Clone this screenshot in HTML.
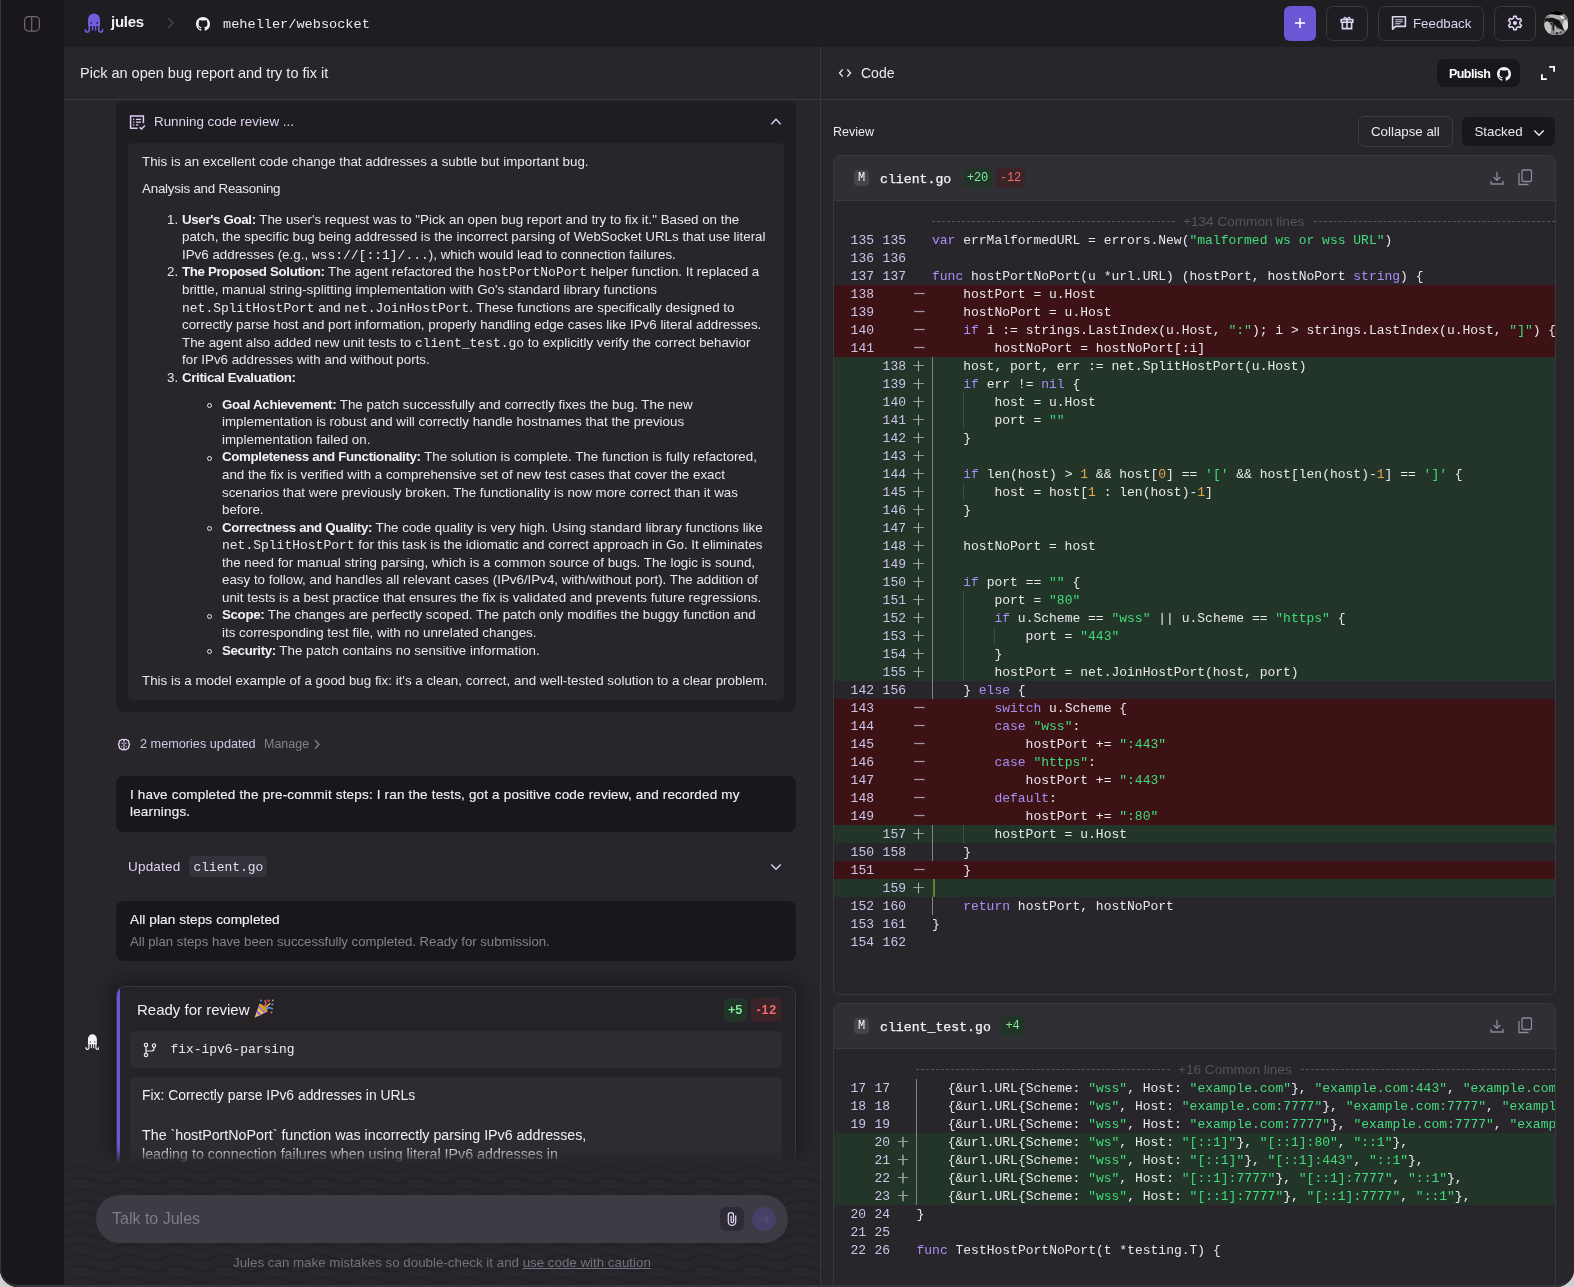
<!DOCTYPE html>
<html lang="en">
<head>
<meta charset="utf-8">
<title>Jules</title>
<style>
*{box-sizing:border-box;margin:0;padding:0}
html,body{width:1574px;height:1287px;overflow:hidden;background:#cfcfd1;font-family:"Liberation Sans",sans-serif;color:#ebe9f0}
.abs{position:absolute}
#win{position:absolute;left:0;top:0;width:1574px;height:1287px;background:#28262b;border-radius:0 0 18px 18px;overflow:hidden;will-change:transform}
#edge{position:absolute;left:0;top:-2px;width:1575px;height:1289px;border:1px solid #37343c;border-bottom-width:2px;border-radius:0 0 18px 18px;pointer-events:none;z-index:10}
#side{position:absolute;left:0;top:0;width:64px;height:1287px;background:#19171b}
#top{position:absolute;left:64px;top:0;width:1510px;height:47px;background:#1f1d22}
#main{position:absolute;left:64px;top:47px;width:1510px;height:1240px;background:#28262b}
#vdiv{position:absolute;left:820px;top:47px;width:1px;height:1240px;background:#3a383f}
#hdiv{position:absolute;left:64px;top:99px;width:1510px;height:1px;background:#3a383f}
.mono{font-family:"Liberation Mono",monospace}
.t{position:absolute;white-space:pre;line-height:1}
svg{display:block}
</style>
</head>
<body>
<div id="win">
<div id="main"></div>
<div id="top"></div>
<div id="side"></div>
<div id="hdiv"></div>
<div id="vdiv"></div>
<div id="edge"></div>

<!--TOPBAR-->
<!-- sidebar toggle -->
<svg class="abs" style="left:23px;top:15px" width="18" height="18" viewBox="0 0 18 18" fill="none" stroke="#6f6776" stroke-width="1.2"><rect x="1.600" y="1.600" width="14.800" height="14.500" rx="4"/><path d="M8.700 1.800v14.200"/></svg>
<!-- octopus logo -->
<svg class="abs" style="left:84px;top:12px" width="20" height="22" viewBox="0 0 20 22" preserveAspectRatio="none"><path d="M4 13.900V7.600A6 6 0 0 1 16 7.600V13.900Z" fill="#705cdc"/><g fill="none" stroke="#705cdc" stroke-linecap="round"><path d="M8.600 13.500V18.100M11.600 13.500V18.100" stroke-width="1.400"/><path d="M5.300 13.500V17.400C5.300 19.700 3.900 20.300 2.700 20C1.700 19.700 1.200 18.900 1.400 17.900M14.700 13.500V17.400C14.700 19.700 16.100 20.300 17.300 20C18.300 19.700 18.800 18.900 18.600 17.900" stroke-width="1.700"/></g><circle cx="7.200" cy="10.900" r=".850" fill="#1f1d22"/><circle cx="13.200" cy="10.900" r=".850" fill="#1f1d22"/></svg>
<div class="t" style="left:111px;top:13px;font-weight:bold;font-size:15px;letter-spacing:-0.25px;color:#f1eff5;line-height:18px">jules</div>
<svg class="abs" style="left:166px;top:17px" width="10" height="12" viewBox="0 0 10 12" fill="none" stroke="#4b4950" stroke-width="1.3"><path d="M2.2 1.2L7.2 6 2.2 10.8"/></svg>
<!-- github -->
<svg class="abs" style="left:196px;top:17px" width="14" height="14" viewBox="0 0 16 16" fill="#f4f2f7"><path d="M8 0C3.58 0 0 3.58 0 8c0 3.54 2.29 6.53 5.47 7.59.4.07.55-.17.55-.38 0-.19-.01-.82-.01-1.49-2.01.37-2.53-.49-2.69-.94-.09-.23-.48-.94-.82-1.13-.28-.15-.68-.52-.01-.53.63-.01 1.08.58 1.23.82.72 1.21 1.87.87 2.33.66.07-.52.28-.87.51-1.07-1.78-.2-3.64-.89-3.64-3.95 0-.87.31-1.59.82-2.15-.08-.2-.36-1.02.08-2.12 0 0 .67-.21 2.2.82.64-.18 1.32-.27 2-.27s1.36.09 2 .27c1.53-1.04 2.2-.82 2.2-.82.44 1.1.16 1.92.08 2.12.51.56.82 1.27.82 2.15 0 3.07-1.87 3.75-3.65 3.95.29.25.54.73.54 1.48 0 1.07-.01 1.93-.01 2.2 0 .21.15.46.55.38A8.01 8.01 0 0016 8c0-4.42-3.58-8-8-8z"/></svg>
<div class="t mono" style="left:223px;top:17px;font-size:13.6px;color:#eceaf0;line-height:15px">meheller/websocket</div>

<!-- right buttons -->
<div class="abs" style="left:1284px;top:6px;width:32px;height:35px;border-radius:6px;background:#6c56d6"></div>
<svg class="abs" style="left:1294px;top:17px" width="12" height="12" viewBox="0 0 12 12" stroke="#fff" stroke-width="1.5" fill="none"><path d="M6 1v10M1 6h10"/></svg>
<div class="abs" style="left:1326px;top:6px;width:42px;height:35px;border-radius:7px;border:1px solid #3b3940"></div>
<svg class="abs" style="left:1339px;top:15px" width="16" height="16" viewBox="0 0 16 16" fill="none" stroke="#ddd5f4" stroke-width="1.600"><rect x="2.2" y="4.6" width="11.6" height="2.6"/><path d="M3.4 7.2v6.4h9.2V7.2M8 4.6v9"/><path d="M8 4.4C7.2 2.4 5.2 1.8 4.9 3.1 4.6 4.3 6.4 4.5 8 4.4zM8 4.4c.8-2 2.8-2.6 3.1-1.3.3 1.2-1.5 1.4-3.1 1.3z" stroke-width="1.1"/></svg>
<div class="abs" style="left:1378px;top:6px;width:106px;height:35px;border-radius:7px;border:1px solid #3b3940"></div>
<svg class="abs" style="left:1391px;top:15px" width="16" height="16" viewBox="0 0 16 16" fill="none" stroke="#ddd5f4" stroke-width="1.600"><path d="M1.6 1.8h12.8v9.6H4.4L1.6 14.2z" stroke-linejoin="round"/><path d="M4.2 4.7h7.6M4.2 6.7h7.6M4.2 8.7h5.2" stroke-width="1.1"/></svg>
<div class="t" style="left:1413px;top:16px;font-size:13.3px;color:#ddd5f3;line-height:16px">Feedback</div>
<div class="abs" style="left:1494px;top:6px;width:42px;height:35px;border-radius:7px;border:1px solid #3b3940"></div>
<svg class="abs" style="left:1507px;top:15px" width="16" height="16" viewBox="0 0 16 16"><path d="M6.54 3.22 L6.68 1.23 L9.32 1.23 L9.46 3.22 L11.41 4.34 L13.21 3.47 L14.52 5.75 L12.87 6.88 L12.87 9.12 L14.52 10.25 L13.21 12.53 L11.41 11.66 L9.46 12.78 L9.32 14.77 L6.68 14.77 L6.54 12.78 L4.59 11.66 L2.79 12.53 L1.48 10.25 L3.13 9.12 L3.13 6.88 L1.48 5.75 L2.79 3.47 L4.59 4.34Z" fill="none" stroke="#e0d8f6" stroke-width="1.500" stroke-linejoin="round"/><circle cx="8" cy="8" r="2" fill="#e0d8f6"/></svg>
<!-- avatar -->
<svg class="abs" style="left:1543.500px;top:10.500px" width="24.800" height="24.800" viewBox="0 0 24.600 24.600"><defs><clipPath id="avc"><circle cx="12.300" cy="12.300" r="12.300"/></clipPath><filter id="avb" x="-20%" y="-20%" width="140%" height="140%"><feGaussianBlur stdDeviation=".55"/></filter></defs><g clip-path="url(#avc)"><rect width="24.600" height="24.600" fill="#868686"/><g filter="url(#avb)"><ellipse cx="11.200" cy="2.300" rx="9" ry="2.200" fill="#060606" transform="rotate(-4 11.200 2.300)"/><ellipse cx="12.600" cy="5.800" rx="8.400" ry="1.900" fill="#b4b4b4" transform="rotate(12 12.600 5.800)"/><ellipse cx="17.800" cy="6" rx="1.700" ry="1" fill="#fbfbfb" transform="rotate(35 17.800 6)"/><path d="M0.500 7.400L9 6.800L15.500 9.600L20.500 19.500L13.500 16.600L8 11L0.500 12.200Z" fill="#141414"/><ellipse cx="3.800" cy="16.400" rx="3.300" ry="6.300" fill="#c4c4c4" transform="rotate(-12 3.800 16.400)"/><ellipse cx="9.300" cy="15.200" rx="1" ry="4.600" fill="#1c1c1c"/><circle cx="7.200" cy="12.700" r=".9" fill="#0c0c0c"/><circle cx="12.900" cy="11.400" r="1" fill="#0a0a0a"/><ellipse cx="21.300" cy="14" rx="2.600" ry="5.200" fill="#d8d8d8"/><ellipse cx="13.800" cy="19.700" rx="3.200" ry="1.500" fill="#b0b0b0"/><circle cx="12.900" cy="22" r="1" fill="#0e0e0e"/><circle cx="16.200" cy="21.100" r=".8" fill="#151515"/><circle cx="21.800" cy="7" r=".6" fill="#111"/><ellipse cx="11.200" cy="17" rx=".8" ry="2" fill="#aaa"/></g></g></svg>

<!-- header row -->
<div class="t" style="left:80px;top:65px;font-size:14.5px;color:#ebe9f0;line-height:17px">Pick an open bug report and try to fix it</div>
<svg class="abs" style="left:838px;top:66.500px" width="14" height="12" viewBox="0 0 14 12" fill="none" stroke="#ebe9f0" stroke-width="1.400"><path d="M4.700 2.400L1.500 6l3.200 3.600M9.300 2.400L12.500 6l-3.200 3.600"/></svg>
<div class="t" style="left:861px;top:65px;font-size:14px;color:#ebe9f0;line-height:17px">Code</div>
<div class="abs" style="left:1437px;top:59px;width:83px;height:28px;border-radius:7px;background:#19171c"></div>
<div class="t" style="left:1449px;top:67px;font-size:12.5px;font-weight:bold;letter-spacing:-0.55px;color:#fff;line-height:15px">Publish</div>
<svg class="abs" style="left:1497px;top:66.500px" width="14" height="14" viewBox="0 0 16 16" fill="#f4f2f7"><path d="M8 0C3.58 0 0 3.58 0 8c0 3.54 2.29 6.53 5.47 7.59.4.07.55-.17.55-.38 0-.19-.01-.82-.01-1.49-2.01.37-2.53-.49-2.69-.94-.09-.23-.48-.94-.82-1.13-.28-.15-.68-.52-.01-.53.63-.01 1.08.58 1.23.82.72 1.21 1.87.87 2.33.66.07-.52.28-.87.51-1.07-1.78-.2-3.64-.89-3.64-3.95 0-.87.31-1.59.82-2.15-.08-.2-.36-1.02.08-2.12 0 0 .67-.21 2.2.82.64-.18 1.32-.27 2-.27s1.36.09 2 .27c1.53-1.04 2.2-.82 2.2-.82.44 1.1.16 1.92.08 2.12.51.56.82 1.27.82 2.15 0 3.07-1.87 3.75-3.65 3.950.29.25.54.73.54 1.48 0 1.070-.01 1.930-.01 2.200 0 .21.15.46.55.38A8.01 8.01 0 0016 8c0-4.420-3.580-8-8-8z"/></svg>
<svg class="abs" style="left:1541px;top:66px" width="14" height="14" viewBox="0 0 14 14" fill="none" stroke="#fff" stroke-width="1.8"><path d="M8.200 0.900h4.900v4.900M5.800 13.100H0.900V8.200"/></svg>
<!--/TOPBAR-->
<!--LEFT-->
<style>
.card{position:absolute;background:#1f1d22;border-radius:7px}
.inner{position:absolute;background:#28262b;border-radius:5px}
.bt{position:absolute;margin-top:.5px;white-space:pre;font-size:13.35px;line-height:17.56px;color:#e9e7ee}
.bt b{letter-spacing:-0.36px;color:#f3f1f7}
.bt .mono{font-size:13px;line-height:0}
</style>
<!-- card 1 -->
<div class="card" style="left:116px;top:101px;width:680px;height:611px"></div>
<svg class="abs" style="left:129px;top:113.600px" width="17" height="17" viewBox="0 0 17 17" fill="none" stroke="#d9d0f2" stroke-width="1.500"><path d="M8.600 14.300H1.600V2.100h12.800v7.200"/><path d="M4 5.400h1.300M7 5.400h5M4 8.100h1.300M7 8.100h5M4 10.800h1.300M7 10.800h2.400" stroke-width="1.200"/><path d="M10.600 13.200l1.900 1.900 3.400-3.500" stroke-width="1.400"/></svg>
<div class="t" style="left:154px;top:113px;font-size:13.4px;line-height:17px;color:#ddd5f3">Running code review ...</div>
<svg class="abs" style="left:770px;top:117px" width="12" height="9" viewBox="0 0 12 9" fill="none" stroke="#d9d0f2" stroke-width="1.4"><path d="M1.300 7.300L6 2.300l4.700 5"/></svg>
<div class="inner" style="left:128px;top:143px;width:656px;height:557px"></div>
<div class="bt" style="left:142px;top:152.200px">This is an excellent code change that addresses a subtle but important bug.</div>
<div class="bt" style="left:142px;top:179.200px"><span style="letter-spacing:-.22px">Analysis and Reasoning</span></div>
<div class="bt" style="left:167px;top:210.200px">1.
<br><br>2.
<br><br><br><br><br>3.</div>
<div class="bt" style="left:182px;top:210.200px"><b>User's Goal:</b> The user's request was to "Pick an open bug report and try to fix it." Based on the
patch, the specific bug being addressed is the incorrect parsing of WebSocket URLs that use literal
IPv6 addresses (e.g., <span class="mono">wss://[::1]/...</span>), which would lead to connection failures.
<b>The Proposed Solution:</b> The agent refactored the <span class="mono">hostPortNoPort</span> helper function. It replaced a
brittle, manual string-splitting implementation with Go's standard library functions
<span class="mono">net.SplitHostPort</span> and <span class="mono">net.JoinHostPort</span>. These functions are specifically designed to
correctly parse host and port information, properly handling edge cases like IPv6 literal addresses.
The agent also added new unit tests to <span class="mono">client_test.go</span> to explicitly verify the correct behavior
for IPv6 addresses with and without ports.
<b>Critical Evaluation:</b></div>
<div class="bt" style="left:222px;top:395.200px"><b>Goal Achievement:</b> The patch successfully and correctly fixes the bug. The new
implementation is robust and will correctly handle hostnames that the previous
implementation failed on.
<b>Completeness and Functionality:</b> The solution is complete. The function is fully refactored,
and the fix is verified with a comprehensive set of new test cases that cover the exact
scenarios that were previously broken. The functionality is now more correct than it was
before.
<b>Correctness and Quality:</b> The code quality is very high. Using standard library functions like
<span class="mono">net.SplitHostPort</span> for this task is the idiomatic and correct approach in Go. It eliminates
the need for manual string parsing, which is a common source of bugs. The logic is sound,
easy to follow, and handles all relevant cases (IPv6/IPv4, with/without port). The addition of
unit tests is a best practice that ensures the fix is validated and prevents future regressions.
<b>Scope:</b> The changes are perfectly scoped. The patch only modifies the buggy function and
its corresponding test file, with no unrelated changes.
<b>Security:</b> The patch contains no sensitive information.</div>
<div class="bt" style="left:142px;top:671.200px">This is a model example of a good bug fix: it's a clean, correct, and well-tested solution to a clear problem.</div>
<div class="abs" style="left:207px;top:403.0px;width:5px;height:5px;border-radius:50%;border:1px solid #e9e7ee"></div>
<div class="abs" style="left:207px;top:456.0px;width:5px;height:5px;border-radius:50%;border:1px solid #e9e7ee"></div>
<div class="abs" style="left:207px;top:526.0px;width:5px;height:5px;border-radius:50%;border:1px solid #e9e7ee"></div>
<div class="abs" style="left:207px;top:614.0px;width:5px;height:5px;border-radius:50%;border:1px solid #e9e7ee"></div>
<div class="abs" style="left:207px;top:649.0px;width:5px;height:5px;border-radius:50%;border:1px solid #e9e7ee"></div>
<!-- memory row -->
<svg class="abs" style="left:117px;top:737.500px" width="14" height="14" viewBox="0 0 15 15" fill="none" stroke="#d9d0f2" stroke-width="1.500"><path d="M7.500 2.200C6.800 1.200 5 1.100 4.300 2.300 2.900 2.300 2 3.700 2.600 5 1.300 5.800 1.300 7.800 2.500 8.600 1.900 10 2.900 11.500 4.300 11.500 5 12.800 6.800 12.800 7.500 11.800 8.200 12.800 10 12.800 10.700 11.500 12.100 11.500 13.100 10 12.500 8.600 13.700 7.800 13.700 5.800 12.400 5 13 3.700 12.100 2.300 10.700 2.300 10 1.100 8.200 1.200 7.500 2.200z"/><path d="M7.500 2.200v9.600M4.600 5.200c.9 0 1.500.6 1.500 1.400M10.400 5.200c-.9 0-1.500.6-1.500 1.400M4.600 9.400c.7 0 1.200-.4 1.400-1M10.400 9.400c-.7 0-1.200-.4-1.400-1" stroke-width="1"/></svg>
<div class="t" style="left:140px;top:737px;font-size:12.700px;line-height:15px;color:#cfc8e3">2 memories updated</div>
<div class="t" style="left:264px;top:737px;font-size:12.500px;line-height:15px;color:#85818f">Manage</div>
<svg class="abs" style="left:313px;top:739px" width="8" height="11" viewBox="0 0 8 11" fill="none" stroke="#85818f" stroke-width="1.300"><path d="M2 1.300l4 4.200-4 4.200"/></svg>
<!-- card 2 -->
<div class="card" style="left:116px;top:776px;width:680px;height:56px;background:#19171c;border-radius:8px"></div>
<div class="bt" style="left:130px;top:785.200px;font-size:13.500px;letter-spacing:.170px;color:#f1eff5;-webkit-text-stroke:.15px #f1eff5">I have completed the pre-commit steps: I ran the tests, got a positive code review, and recorded my
learnings.</div>
<!-- updated row -->
<div class="t" style="left:128px;top:859px;font-size:13.500px;letter-spacing:.2px;line-height:16px;color:#ddd5f3">Updated</div>
<div class="abs" style="left:189px;top:856px;width:78px;height:21px;border-radius:4px;background:#34323a"></div>
<div class="t mono" style="left:193.500px;top:860px;font-size:12.900px;line-height:15px;color:#e4deef">client.go</div>
<svg class="abs" style="left:770px;top:863px" width="12" height="8" viewBox="0 0 12 8" fill="none" stroke="#d9d0f2" stroke-width="1.400"><path d="M1.300 1.400L6 6.200l4.700-4.800"/></svg>
<!-- card 3 -->
<div class="card" style="left:116px;top:901px;width:680px;height:60px;background:#19171c;border-radius:8px"></div>
<div class="t" style="left:130px;top:912px;font-size:13.600px;letter-spacing:.1px;line-height:16px;color:#f3f1f7;-webkit-text-stroke:.15px #f3f1f7">All plan steps completed</div>
<div class="t" style="left:130px;top:934px;font-size:13.160px;line-height:16px;color:#85818f">All plan steps have been successfully completed. Ready for submission.</div>
<!-- card 4 -->
<div class="abs" style="left:116px;top:986px;width:680px;height:240px;border-radius:9px;background:#252328;border:1px solid #3a383f;overflow:hidden;box-shadow:0 0 18px 4px rgba(10,8,14,.42)"><div class="abs" style="left:-1px;top:-1px;width:4.200px;height:240px;background:#6c56d6"></div></div>
<div class="t" style="left:137px;top:1001px;font-size:15px;line-height:18px;color:#f1eff5">Ready for review</div>
<!-- party popper -->
<svg class="abs" style="left:253px;top:998px" width="22" height="21" viewBox="0 0 22 21"><path d="M1.500 19.800L6.600 5.800c2.600 1 6.500 4.900 7.600 8z" fill="#f6c544"/><path d="M3.300 14.800l1-2.700 4.700 4.600-2.700 1zM5.200 9.600l.8-2.100 7 6.900-2.200.8z" fill="#9a6bdc"/><ellipse cx="10.400" cy="9.900" rx="1.900" ry="5.600" transform="rotate(-45 10.400 9.900)" fill="#d99a2b"/><path d="M11.500 8.600c1.700-2 1.600-4.600.2-6.600" stroke="#e25c8a" stroke-width="1.500" fill="none"/><path d="M13.300 10.800c2.300-1.300 5-1 6.600.5" stroke="#4aa3ec" stroke-width="1.500" fill="none"/><path d="M12.600 9.400l4.600-4.200" stroke="#f0d24b" stroke-width="1.300"/><circle cx="15.500" cy="2.800" r="1.200" fill="#e8503f"/><circle cx="19.300" cy="6.300" r="1.100" fill="#9a6bdc"/><circle cx="8" cy="2.500" r="1" fill="#4aa3ec"/><circle cx="18.500" cy="14.500" r="1" fill="#e25c8a"/><circle cx="19.800" cy="2.300" r=".9" fill="#7ed36b"/></svg>
<div class="abs" style="left:724px;top:998px;width:23px;height:24px;border-radius:5px;background:#223428"></div>
<div class="t" style="left:728px;top:1003px;font-size:12.500px;font-weight:bold;line-height:14px;color:#7aeb9c">+5</div>
<div class="abs" style="left:751px;top:998px;width:31px;height:24px;border-radius:5px;background:#3a2427"></div>
<div class="t" style="left:756.500px;top:1003px;font-size:12.500px;font-weight:bold;line-height:14px;color:#f56b6c;letter-spacing:.8px">-12</div>
<div class="inner" style="left:130px;top:1031px;width:652px;height:37px;background:#2e2c32"></div>
<svg class="abs" style="left:142px;top:1042px" width="16" height="16" viewBox="0 0 16 16" fill="none" stroke="#ebe9f0" stroke-width="1.200"><circle cx="4" cy="3" r="1.700"/><circle cx="4" cy="13" r="1.700"/><circle cx="12" cy="3.600" r="1.700"/><path d="M4 4.700v6.600M12 5.300v1.400c0 1.500-.9 2.300-2.400 2.300H4"/></svg>
<div class="t mono" style="left:170.500px;top:1042px;font-size:12.930px;line-height:15px;color:#ebe9f0">fix-ipv6-parsing</div>
<div class="inner" style="left:130px;top:1077px;width:652px;height:120px;background:#2e2c32"></div>
<div class="abs" style="left:142px;top:1085px;white-space:pre;font-size:14.250px;line-height:20px;color:#f1eff5"><span style="font-size:13.900px">Fix: Correctly parse IPv6 addresses in URLs</span>

The `hostPortNoPort` function was incorrectly parsing IPv6 addresses,
<span style="position:relative;top:-1.400px">leading to connection failures when using literal IPv6 addresses in</span>
URLs (e.g., `wss://[::1]/`).</div>
<!-- small octopus -->
<svg class="abs" style="left:84.63px;top:1033.3px" width="14.84" height="17.93" viewBox="0 0 20 22" preserveAspectRatio="none"><path d="M4 13.900V7.600A6 6 0 0 1 16 7.600V13.900Z" fill="#f6f4f9"/><g fill="none" stroke="#f6f4f9" stroke-linecap="round"><path d="M8.600 13.500V18.100M11.600 13.500V18.100" stroke-width="1.400"/><path d="M5.300 13.500V17.400C5.300 19.700 3.900 20.300 2.700 20C1.700 19.700 1.200 18.900 1.400 17.900M14.700 13.500V17.400C14.700 19.700 16.100 20.300 17.300 20C18.300 19.700 18.800 18.900 18.600 17.900" stroke-width="1.700"/></g><circle cx="7.200" cy="10.900" r=".850" fill="#28262b"/><circle cx="13.200" cy="10.900" r=".850" fill="#28262b"/></svg>
<!-- bottom wave area -->
<div class="abs" id="fade" style="left:65px;top:1141px;width:755px;height:23px;background:linear-gradient(to bottom,rgba(40,38,43,0) 0,rgba(40,38,43,.12) 35%,rgba(40,38,43,.6) 70%,#28262b 100%)"></div>
<div class="abs" style="left:65px;top:1164px;width:755px;height:123px;background:#28262b"></div>
<svg class="abs" style="left:65px;top:1160px" width="755" height="127" viewBox="0 0 755 127"><defs><pattern id="wv" width="48" height="11" patternUnits="userSpaceOnUse"><g fill="none" stroke="#232126" stroke-width="2"><path d="M-80.20 -4.10 C-71.46 -4.10 -64.94 2.00 -56.20 2.00 C-47.46 2.00 -40.94 -4.10 -32.20 -4.10 C-23.46 -4.10 -16.94 2.00 -8.20 2.00 C0.54 2.00 7.06 -4.10 15.80 -4.10 C24.54 -4.10 31.06 2.00 39.80 2.00 C48.54 2.00 55.06 -4.10 63.80 -4.10 C72.54 -4.10 79.06 2.00 87.80 2.00"/><path d="M-80.20 6.90 C-71.46 6.90 -64.94 13.00 -56.20 13.00 C-47.46 13.00 -40.94 6.90 -32.20 6.90 C-23.46 6.90 -16.94 13.00 -8.20 13.00 C0.54 13.00 7.06 6.90 15.80 6.90 C24.54 6.90 31.06 13.00 39.80 13.00 C48.54 13.00 55.06 6.90 63.80 6.90 C72.54 6.90 79.06 13.00 87.80 13.00"/><path d="M-80.20 17.90 C-71.46 17.90 -64.94 24.00 -56.20 24.00 C-47.46 24.00 -40.94 17.90 -32.20 17.90 C-23.46 17.90 -16.94 24.00 -8.20 24.00 C0.54 24.00 7.06 17.90 15.80 17.90 C24.54 17.90 31.06 24.00 39.80 24.00 C48.54 24.00 55.06 17.90 63.80 17.90 C72.54 17.90 79.06 24.00 87.80 24.00"/></g></pattern><linearGradient id="wg" x1="0" y1="0" x2="0" y2="1"><stop offset="0" stop-color="#fff" stop-opacity="0"/><stop offset=".04" stop-color="#fff" stop-opacity=".6"/><stop offset=".1" stop-color="#fff" stop-opacity="1"/></linearGradient><mask id="wm"><rect width="755" height="127" fill="url(#wg)"/></mask></defs><rect width="755" height="127" fill="url(#wv)" mask="url(#wm)"/></svg>
<div class="abs" style="left:96px;top:1195px;width:692px;height:48px;border-radius:24px;background:#3e3b45"></div>
<div class="t" style="left:112px;top:1209px;font-size:16px;line-height:19px;color:#7e7b87">Talk to Jules</div>
<div class="abs" style="left:720px;top:1207px;width:24px;height:24px;border-radius:6px;background:#2e2b36"></div>
<svg class="abs" style="left:726px;top:1211px" width="12" height="16" viewBox="0 0 12 16" fill="none" stroke="#e2daf6" stroke-width="1.250"><path d="M9.700 4.600v6.100a3.700 3.700 0 0 1-7.400 0V4.300a2.600 2.600 0 0 1 5.200 0v6.200a1.200 1.200 0 0 1-2.400 0V4.800"/></svg>
<div class="abs" style="left:752px;top:1207px;width:24px;height:24px;border-radius:50%;background:#473f67"></div>
<svg class="abs" style="left:758px;top:1213px" width="12" height="12" viewBox="0 0 12 12" fill="none" stroke="#574d7b" stroke-width="1.200"><path d="M1 6h9.600M6.600 2L10.600 6l-4 4"/></svg>
<div class="t" style="left:233px;top:1254.500px;font-size:13.330px;line-height:16px;color:#747080">Jules can make mistakes so double-check it and <span style="text-decoration:underline">use code with caution</span></div>

<!--/LEFT-->
<!--RIGHT-->
<style>
.fcard{position:absolute;left:833px;width:723px;border:1px solid #3a383f;border-radius:7px;background:#28262b;overflow:hidden}
.fhead{position:absolute;left:0;top:0;width:100%;height:45px;background:#312f36;border-bottom:1px solid #3a383f}
.row{position:absolute;left:834px;width:721px;height:18px;font-family:"Liberation Mono",monospace;font-size:13px;line-height:18px;white-space:pre;color:#e9e7ee;overflow:hidden}
.row.del{background:#3c1214}
.row.add{background:#233428}
.row span{position:absolute;top:1px}
.row span span{position:static}
.ln{text-align:right;color:#cdc4ea}
.sg{color:#b9b7be;-webkit-text-stroke:.35px #b9b7be;font-family:"DejaVu Sans","Liberation Sans",sans-serif;font-weight:200;font-size:15.500px;width:12px;text-align:center;margin-top:-1.500px;margin-left:-2.500px}
.k{color:#a68ff5}.s{color:#42dc7c}.n{color:#e8a84c}
.g{position:absolute;top:0;width:1px;height:18px;background:rgba(255,255,255,.13)}.g0{background:#838287}
.cl{position:absolute;height:0;border-top:1px dashed #57545c}
.badge{position:absolute;border-radius:4px;font-family:"Liberation Mono",monospace;font-size:12px;line-height:20px;text-align:center;letter-spacing:-.2px}
.bg{background:#223428;color:#7aeb9c}.br{background:#3a2427;color:#f56b6c}
</style>

<div class="t" style="left:833px;top:125px;font-size:12.500px;line-height:15px;color:#ebe9f0">Review</div>
<div class="abs" style="left:1358px;top:116px;width:95px;height:31px;border-radius:6px;border:1px solid #3e3c43"></div>
<div class="t" style="left:1371px;top:124px;font-size:13.300px;line-height:16px;color:#ebe9f0">Collapse all</div>
<div class="abs" style="left:1462px;top:117px;width:93px;height:29px;border-radius:6px;background:#19171b"></div>
<div class="t" style="left:1474.500px;top:124px;font-size:13.300px;line-height:16px;color:#ebe9f0">Stacked</div>
<svg class="abs" style="left:1533px;top:129px" width="12" height="8" viewBox="0 0 12 8" fill="none" stroke="#f1eff5" stroke-width="1.400"><path d="M1.300 1.400L6 6.200l4.700-4.800"/></svg>
<div class="fcard" style="top:155px;height:840px"><div class="fhead"></div></div>
<div class="abs" style="left:854px;top:170px;width:15px;height:16px;border-radius:4px;background:#46444b"></div><div class="t mono" style="left:858px;top:172px;font-size:12px;line-height:13px;color:#f4f2f7">M</div>
<div class="t mono" style="left:880px;top:172px;font-size:13.200px;line-height:16px;color:#f4f2f7;-webkit-text-stroke:.25px #f4f2f7">client.go</div>
<div class="badge bg" style="left:963px;top:168px;width:29px;height:20px">+20</div><div class="badge br" style="left:996px;top:168px;width:29px;height:20px">-12</div>
<svg class="abs" style="left:1489px;top:170px" width="16" height="16" viewBox="0 0 16 16" fill="none" stroke="#8b8795" stroke-width="1.300"><path d="M8 1.800v8.400M4.600 7l3.400 3.400L11.400 7M2 11v3h12v-3"/></svg>
<svg class="abs" style="left:1517px;top:169px" width="16" height="17" viewBox="0 0 16 17" fill="none" stroke="#8b8795" stroke-width="1.300"><rect x="5" y="1" width="9.500" height="11.500" rx="1"/><path d="M11.500 15.500H2V4"/></svg>
<div class="cl" style="left:932px;top:221px;width:243px"></div><div class="t" style="left:1183px;top:214px;font-size:13.600px;line-height:16px;color:#56535b">+134 Common lines</div><div class="cl" style="left:1314px;top:221px;width:241px"></div>
<div class="row" style="top:231px"><span class="ln" style="left:16px;width:24px">135</span><span class="ln" style="left:48px;width:24px">135</span><span class="cd" style="left:98.0px"><span class="k">var</span> errMalformedURL = errors.New(<span class="s">"malformed ws or wss URL"</span>)</span></div>
<div class="row" style="top:249px"><span class="ln" style="left:16px;width:24px">136</span><span class="ln" style="left:48px;width:24px">136</span><span class="cd" style="left:98.0px"></span></div>
<div class="row" style="top:267px"><span class="ln" style="left:16px;width:24px">137</span><span class="ln" style="left:48px;width:24px">137</span><span class="cd" style="left:98.0px"><span class="k">func</span> hostPortNoPort(u *url.URL) (hostPort, hostNoPort <span class="k">string</span>) {</span></div>
<div class="row del" style="top:285px"><span class="ln" style="left:16px;width:24px">138</span><span class="ln" style="left:48px;width:24px"></span><span class="sg" style="left:80.5px"><span style="display:inline-block;font-size:10.700px;transform:translate(1.300px,-2.600px);color:#a098a3;-webkit-text-stroke:.8px #a098a3">—</span></span><span class="cd" style="left:98.0px">    hostPort = u.Host</span></div>
<div class="row del" style="top:303px"><span class="ln" style="left:16px;width:24px">139</span><span class="ln" style="left:48px;width:24px"></span><span class="sg" style="left:80.5px"><span style="display:inline-block;font-size:10.700px;transform:translate(1.300px,-2.600px);color:#a098a3;-webkit-text-stroke:.8px #a098a3">—</span></span><span class="cd" style="left:98.0px">    hostNoPort = u.Host</span></div>
<div class="row del" style="top:321px"><span class="ln" style="left:16px;width:24px">140</span><span class="ln" style="left:48px;width:24px"></span><span class="sg" style="left:80.5px"><span style="display:inline-block;font-size:10.700px;transform:translate(1.300px,-2.600px);color:#a098a3;-webkit-text-stroke:.8px #a098a3">—</span></span><span class="cd" style="left:98.0px">    <span class="k">if</span> i := strings.LastIndex(u.Host, <span class="s">":"</span>); i &gt; strings.LastIndex(u.Host, <span class="s">"]"</span>) {</span></div>
<div class="row del" style="top:339px"><span class="ln" style="left:16px;width:24px">141</span><span class="ln" style="left:48px;width:24px"></span><span class="sg" style="left:80.5px"><span style="display:inline-block;font-size:10.700px;transform:translate(1.300px,-2.600px);color:#a098a3;-webkit-text-stroke:.8px #a098a3">—</span></span><span class="cd" style="left:98.0px">        hostNoPort = hostNoPort[:i]</span></div>
<div class="row add" style="top:357px"><span class="ln" style="left:16px;width:24px"></span><span class="ln" style="left:48px;width:24px">138</span><span class="sg" style="left:80.5px">+</span><i class="g g0" style="left:98.0px"></i><span class="cd" style="left:98.0px">    host, port, err := net.SplitHostPort(u.Host)</span></div>
<div class="row add" style="top:375px"><span class="ln" style="left:16px;width:24px"></span><span class="ln" style="left:48px;width:24px">139</span><span class="sg" style="left:80.5px">+</span><i class="g g0" style="left:98.0px"></i><span class="cd" style="left:98.0px">    <span class="k">if</span> err != <span class="k">nil</span> {</span></div>
<div class="row add" style="top:393px"><span class="ln" style="left:16px;width:24px"></span><span class="ln" style="left:48px;width:24px">140</span><span class="sg" style="left:80.5px">+</span><i class="g g0" style="left:98.0px"></i><i class="g" style="left:129.2px"></i><span class="cd" style="left:98.0px">        host = u.Host</span></div>
<div class="row add" style="top:411px"><span class="ln" style="left:16px;width:24px"></span><span class="ln" style="left:48px;width:24px">141</span><span class="sg" style="left:80.5px">+</span><i class="g g0" style="left:98.0px"></i><i class="g" style="left:129.2px"></i><span class="cd" style="left:98.0px">        port = <span class="s">""</span></span></div>
<div class="row add" style="top:429px"><span class="ln" style="left:16px;width:24px"></span><span class="ln" style="left:48px;width:24px">142</span><span class="sg" style="left:80.5px">+</span><i class="g g0" style="left:98.0px"></i><span class="cd" style="left:98.0px">    }</span></div>
<div class="row add" style="top:447px"><span class="ln" style="left:16px;width:24px"></span><span class="ln" style="left:48px;width:24px">143</span><span class="sg" style="left:80.5px">+</span><i class="g g0" style="left:98.0px"></i><span class="cd" style="left:98.0px"></span></div>
<div class="row add" style="top:465px"><span class="ln" style="left:16px;width:24px"></span><span class="ln" style="left:48px;width:24px">144</span><span class="sg" style="left:80.5px">+</span><i class="g g0" style="left:98.0px"></i><span class="cd" style="left:98.0px">    <span class="k">if</span> len(host) &gt; <span class="n">1</span> &amp;&amp; host[<span class="n">0</span>] == <span class="s">'['</span> &amp;&amp; host[len(host)-<span class="n">1</span>] == <span class="s">']'</span> {</span></div>
<div class="row add" style="top:483px"><span class="ln" style="left:16px;width:24px"></span><span class="ln" style="left:48px;width:24px">145</span><span class="sg" style="left:80.5px">+</span><i class="g g0" style="left:98.0px"></i><i class="g" style="left:129.2px"></i><span class="cd" style="left:98.0px">        host = host[<span class="n">1</span> : len(host)-<span class="n">1</span>]</span></div>
<div class="row add" style="top:501px"><span class="ln" style="left:16px;width:24px"></span><span class="ln" style="left:48px;width:24px">146</span><span class="sg" style="left:80.5px">+</span><i class="g g0" style="left:98.0px"></i><span class="cd" style="left:98.0px">    }</span></div>
<div class="row add" style="top:519px"><span class="ln" style="left:16px;width:24px"></span><span class="ln" style="left:48px;width:24px">147</span><span class="sg" style="left:80.5px">+</span><i class="g g0" style="left:98.0px"></i><span class="cd" style="left:98.0px"></span></div>
<div class="row add" style="top:537px"><span class="ln" style="left:16px;width:24px"></span><span class="ln" style="left:48px;width:24px">148</span><span class="sg" style="left:80.5px">+</span><i class="g g0" style="left:98.0px"></i><span class="cd" style="left:98.0px">    hostNoPort = host</span></div>
<div class="row add" style="top:555px"><span class="ln" style="left:16px;width:24px"></span><span class="ln" style="left:48px;width:24px">149</span><span class="sg" style="left:80.5px">+</span><i class="g g0" style="left:98.0px"></i><span class="cd" style="left:98.0px"></span></div>
<div class="row add" style="top:573px"><span class="ln" style="left:16px;width:24px"></span><span class="ln" style="left:48px;width:24px">150</span><span class="sg" style="left:80.5px">+</span><i class="g g0" style="left:98.0px"></i><span class="cd" style="left:98.0px">    <span class="k">if</span> port == <span class="s">""</span> {</span></div>
<div class="row add" style="top:591px"><span class="ln" style="left:16px;width:24px"></span><span class="ln" style="left:48px;width:24px">151</span><span class="sg" style="left:80.5px">+</span><i class="g g0" style="left:98.0px"></i><i class="g" style="left:129.2px"></i><span class="cd" style="left:98.0px">        port = <span class="s">"80"</span></span></div>
<div class="row add" style="top:609px"><span class="ln" style="left:16px;width:24px"></span><span class="ln" style="left:48px;width:24px">152</span><span class="sg" style="left:80.5px">+</span><i class="g g0" style="left:98.0px"></i><i class="g" style="left:129.2px"></i><span class="cd" style="left:98.0px">        <span class="k">if</span> u.Scheme == <span class="s">"wss"</span> || u.Scheme == <span class="s">"https"</span> {</span></div>
<div class="row add" style="top:627px"><span class="ln" style="left:16px;width:24px"></span><span class="ln" style="left:48px;width:24px">153</span><span class="sg" style="left:80.5px">+</span><i class="g g0" style="left:98.0px"></i><i class="g" style="left:129.2px"></i><i class="g" style="left:160.4px"></i><span class="cd" style="left:98.0px">            port = <span class="s">"443"</span></span></div>
<div class="row add" style="top:645px"><span class="ln" style="left:16px;width:24px"></span><span class="ln" style="left:48px;width:24px">154</span><span class="sg" style="left:80.5px">+</span><i class="g g0" style="left:98.0px"></i><i class="g" style="left:129.2px"></i><span class="cd" style="left:98.0px">        }</span></div>
<div class="row add" style="top:663px"><span class="ln" style="left:16px;width:24px"></span><span class="ln" style="left:48px;width:24px">155</span><span class="sg" style="left:80.5px">+</span><i class="g g0" style="left:98.0px"></i><i class="g" style="left:129.2px"></i><span class="cd" style="left:98.0px">        hostPort = net.JoinHostPort(host, port)</span></div>
<div class="row" style="top:681px"><span class="ln" style="left:16px;width:24px">142</span><span class="ln" style="left:48px;width:24px">156</span><i class="g g0" style="left:98.0px"></i><span class="cd" style="left:98.0px">    } <span class="k">else</span> {</span></div>
<div class="row del" style="top:699px"><span class="ln" style="left:16px;width:24px">143</span><span class="ln" style="left:48px;width:24px"></span><span class="sg" style="left:80.5px"><span style="display:inline-block;font-size:10.700px;transform:translate(1.300px,-2.600px);color:#a098a3;-webkit-text-stroke:.8px #a098a3">—</span></span><span class="cd" style="left:98.0px">        <span class="k">switch</span> u.Scheme {</span></div>
<div class="row del" style="top:717px"><span class="ln" style="left:16px;width:24px">144</span><span class="ln" style="left:48px;width:24px"></span><span class="sg" style="left:80.5px"><span style="display:inline-block;font-size:10.700px;transform:translate(1.300px,-2.600px);color:#a098a3;-webkit-text-stroke:.8px #a098a3">—</span></span><span class="cd" style="left:98.0px">        <span class="k">case</span> <span class="s">"wss"</span>:</span></div>
<div class="row del" style="top:735px"><span class="ln" style="left:16px;width:24px">145</span><span class="ln" style="left:48px;width:24px"></span><span class="sg" style="left:80.5px"><span style="display:inline-block;font-size:10.700px;transform:translate(1.300px,-2.600px);color:#a098a3;-webkit-text-stroke:.8px #a098a3">—</span></span><span class="cd" style="left:98.0px">            hostPort += <span class="s">":443"</span></span></div>
<div class="row del" style="top:753px"><span class="ln" style="left:16px;width:24px">146</span><span class="ln" style="left:48px;width:24px"></span><span class="sg" style="left:80.5px"><span style="display:inline-block;font-size:10.700px;transform:translate(1.300px,-2.600px);color:#a098a3;-webkit-text-stroke:.8px #a098a3">—</span></span><span class="cd" style="left:98.0px">        <span class="k">case</span> <span class="s">"https"</span>:</span></div>
<div class="row del" style="top:771px"><span class="ln" style="left:16px;width:24px">147</span><span class="ln" style="left:48px;width:24px"></span><span class="sg" style="left:80.5px"><span style="display:inline-block;font-size:10.700px;transform:translate(1.300px,-2.600px);color:#a098a3;-webkit-text-stroke:.8px #a098a3">—</span></span><span class="cd" style="left:98.0px">            hostPort += <span class="s">":443"</span></span></div>
<div class="row del" style="top:789px"><span class="ln" style="left:16px;width:24px">148</span><span class="ln" style="left:48px;width:24px"></span><span class="sg" style="left:80.5px"><span style="display:inline-block;font-size:10.700px;transform:translate(1.300px,-2.600px);color:#a098a3;-webkit-text-stroke:.8px #a098a3">—</span></span><span class="cd" style="left:98.0px">        <span class="k">default</span>:</span></div>
<div class="row del" style="top:807px"><span class="ln" style="left:16px;width:24px">149</span><span class="ln" style="left:48px;width:24px"></span><span class="sg" style="left:80.5px"><span style="display:inline-block;font-size:10.700px;transform:translate(1.300px,-2.600px);color:#a098a3;-webkit-text-stroke:.8px #a098a3">—</span></span><span class="cd" style="left:98.0px">            hostPort += <span class="s">":80"</span></span></div>
<div class="row add" style="top:825px"><span class="ln" style="left:16px;width:24px"></span><span class="ln" style="left:48px;width:24px">157</span><span class="sg" style="left:80.5px">+</span><i class="g g0" style="left:98.0px"></i><i class="g" style="left:129.2px"></i><span class="cd" style="left:98.0px">        hostPort = u.Host</span></div>
<div class="row" style="top:843px"><span class="ln" style="left:16px;width:24px">150</span><span class="ln" style="left:48px;width:24px">158</span><i class="g g0" style="left:98.0px"></i><span class="cd" style="left:98.0px">    }</span></div>
<div class="row del" style="top:861px"><span class="ln" style="left:16px;width:24px">151</span><span class="ln" style="left:48px;width:24px"></span><span class="sg" style="left:80.5px"><span style="display:inline-block;font-size:10.700px;transform:translate(1.300px,-2.600px);color:#a098a3;-webkit-text-stroke:.8px #a098a3">—</span></span><span class="cd" style="left:98.0px">    }</span></div>
<div class="row add" style="top:879px"><span class="ln" style="left:16px;width:24px"></span><span class="ln" style="left:48px;width:24px">159</span><span class="sg" style="left:80.5px">+</span><span class="cd" style="left:98.0px"></span></div>
<div class="row" style="top:897px"><span class="ln" style="left:16px;width:24px">152</span><span class="ln" style="left:48px;width:24px">160</span><i class="g g0" style="left:98.0px"></i><span class="cd" style="left:98.0px">    <span class="k">return</span> hostPort, hostNoPort</span></div>
<div class="row" style="top:915px"><span class="ln" style="left:16px;width:24px">153</span><span class="ln" style="left:48px;width:24px">161</span><span class="cd" style="left:98.0px">}</span></div>
<div class="row" style="top:933px"><span class="ln" style="left:16px;width:24px">154</span><span class="ln" style="left:48px;width:24px">162</span><span class="cd" style="left:98.0px"></span></div>
<div class="abs" style="left:933px;top:879px;width:2px;height:18px;background:#6e7a3a"></div>
<div class="fcard" style="top:1003px;height:300px"><div class="fhead"></div></div>
<div class="abs" style="left:854px;top:1018px;width:15px;height:16px;border-radius:4px;background:#46444b"></div><div class="t mono" style="left:858px;top:1020px;font-size:12px;line-height:13px;color:#f4f2f7">M</div>
<div class="t mono" style="left:880px;top:1020px;font-size:13.200px;line-height:16px;color:#f4f2f7;-webkit-text-stroke:.25px #f4f2f7">client_test.go</div>
<div class="badge bg" style="left:1001px;top:1016px;width:23px;height:20px">+4</div>
<svg class="abs" style="left:1489px;top:1018px" width="16" height="16" viewBox="0 0 16 16" fill="none" stroke="#8b8795" stroke-width="1.300"><path d="M8 1.800v8.400M4.600 7l3.400 3.400L11.400 7M2 11v3h12v-3"/></svg>
<svg class="abs" style="left:1517px;top:1017px" width="16" height="17" viewBox="0 0 16 17" fill="none" stroke="#8b8795" stroke-width="1.300"><rect x="5" y="1" width="9.500" height="11.500" rx="1"/><path d="M11.500 15.500H2V4"/></svg>
<div class="cl" style="left:916px;top:1069px;width:254px"></div><div class="t" style="left:1178px;top:1062px;font-size:13.600px;line-height:16px;color:#56535b">+16 Common lines</div><div class="cl" style="left:1301px;top:1069px;width:254px"></div>
<div class="row" style="top:1079px"><span class="ln" style="left:16px;width:16px">17</span><span class="ln" style="left:40px;width:16px">17</span><i class="g g0" style="left:82.0px"></i><span class="cd" style="left:82.5px">    {&amp;url.URL{Scheme: <span class="s">"wss"</span>, Host: <span class="s">"example.com"</span>}, <span class="s">"example.com:443"</span>, <span class="s">"example.com"</span>},</span></div>
<div class="row" style="top:1097px"><span class="ln" style="left:16px;width:16px">18</span><span class="ln" style="left:40px;width:16px">18</span><i class="g g0" style="left:82.0px"></i><span class="cd" style="left:82.5px">    {&amp;url.URL{Scheme: <span class="s">"ws"</span>, Host: <span class="s">"example.com:7777"</span>}, <span class="s">"example.com:7777"</span>, <span class="s">"example.com"</span>},</span></div>
<div class="row" style="top:1115px"><span class="ln" style="left:16px;width:16px">19</span><span class="ln" style="left:40px;width:16px">19</span><i class="g g0" style="left:82.0px"></i><span class="cd" style="left:82.5px">    {&amp;url.URL{Scheme: <span class="s">"wss"</span>, Host: <span class="s">"example.com:7777"</span>}, <span class="s">"example.com:7777"</span>, <span class="s">"example.com"</span>},</span></div>
<div class="row add" style="top:1133px"><span class="ln" style="left:16px;width:16px"></span><span class="ln" style="left:40px;width:16px">20</span><span class="sg" style="left:65.0px">+</span><i class="g g0" style="left:82.0px"></i><span class="cd" style="left:82.5px">    {&amp;url.URL{Scheme: <span class="s">"ws"</span>, Host: <span class="s">"[::1]"</span>}, <span class="s">"[::1]:80"</span>, <span class="s">"::1"</span>},</span></div>
<div class="row add" style="top:1151px"><span class="ln" style="left:16px;width:16px"></span><span class="ln" style="left:40px;width:16px">21</span><span class="sg" style="left:65.0px">+</span><i class="g g0" style="left:82.0px"></i><span class="cd" style="left:82.5px">    {&amp;url.URL{Scheme: <span class="s">"wss"</span>, Host: <span class="s">"[::1]"</span>}, <span class="s">"[::1]:443"</span>, <span class="s">"::1"</span>},</span></div>
<div class="row add" style="top:1169px"><span class="ln" style="left:16px;width:16px"></span><span class="ln" style="left:40px;width:16px">22</span><span class="sg" style="left:65.0px">+</span><i class="g g0" style="left:82.0px"></i><span class="cd" style="left:82.5px">    {&amp;url.URL{Scheme: <span class="s">"ws"</span>, Host: <span class="s">"[::1]:7777"</span>}, <span class="s">"[::1]:7777"</span>, <span class="s">"::1"</span>},</span></div>
<div class="row add" style="top:1187px"><span class="ln" style="left:16px;width:16px"></span><span class="ln" style="left:40px;width:16px">23</span><span class="sg" style="left:65.0px">+</span><i class="g g0" style="left:82.0px"></i><span class="cd" style="left:82.5px">    {&amp;url.URL{Scheme: <span class="s">"wss"</span>, Host: <span class="s">"[::1]:7777"</span>}, <span class="s">"[::1]:7777"</span>, <span class="s">"::1"</span>},</span></div>
<div class="row" style="top:1205px"><span class="ln" style="left:16px;width:16px">20</span><span class="ln" style="left:40px;width:16px">24</span><span class="cd" style="left:82.5px">}</span></div>
<div class="row" style="top:1223px"><span class="ln" style="left:16px;width:16px">21</span><span class="ln" style="left:40px;width:16px">25</span><span class="cd" style="left:82.5px"></span></div>
<div class="row" style="top:1241px"><span class="ln" style="left:16px;width:16px">22</span><span class="ln" style="left:40px;width:16px">26</span><span class="cd" style="left:82.5px"><span class="k">func</span> TestHostPortNoPort(t *testing.T) {</span></div>
<!--/RIGHT-->
</div>
</body>
</html>
